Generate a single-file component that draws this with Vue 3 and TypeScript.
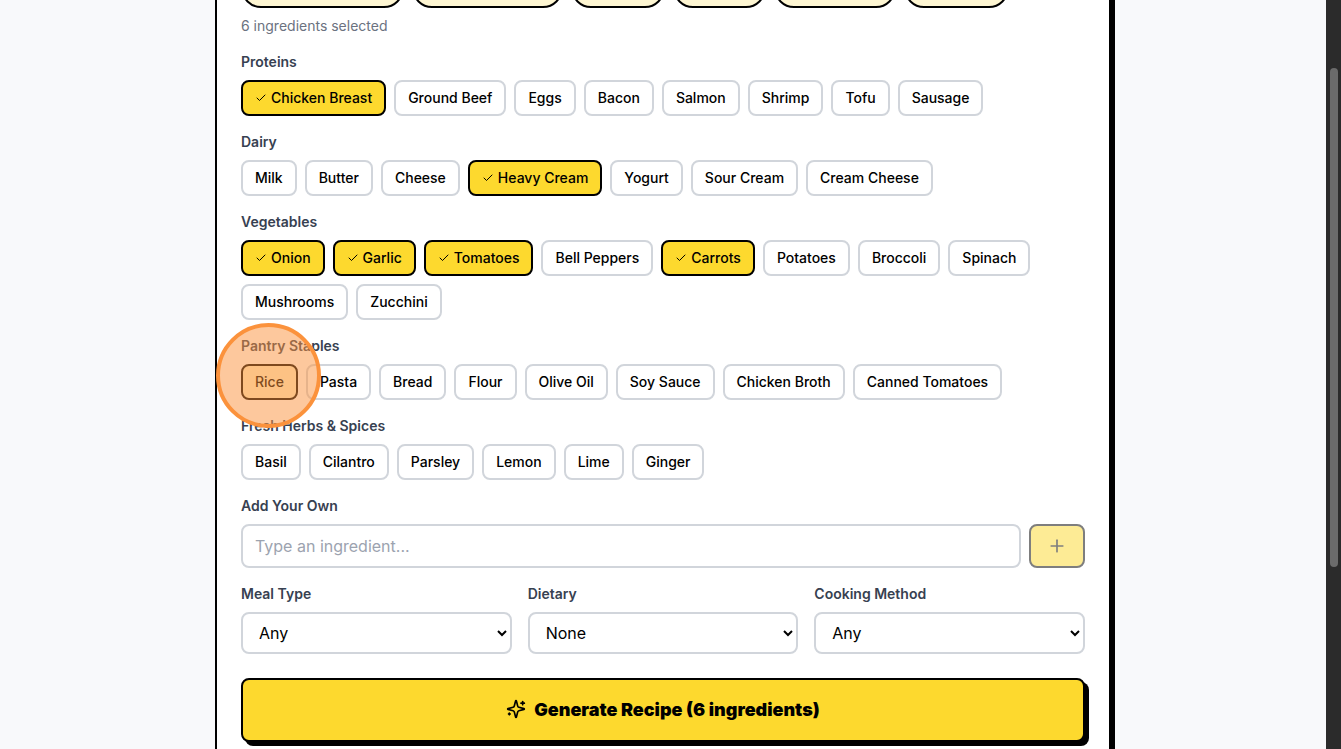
<script setup lang="ts">
interface Section {
  title: string;
  items: string[];
}

// The picked pills sit above the fold: only their lower edges are in view.
const pickedPills = [
  { name: "Chicken Breast", width: 163.4 },
  { name: "Heavy Cream", width: 151 },
  { name: "Onion", width: 93.7 },
  { name: "Garlic", width: 92.6 },
  { name: "Tomatoes", width: 122.3 },
  { name: "Carrots", width: 105 },
];

const selected = pickedPills.map((pill) => pill.name);

const sections: Section[] = [
  { title: "Proteins", items: ["Chicken Breast", "Ground Beef", "Eggs", "Bacon", "Salmon", "Shrimp", "Tofu", "Sausage"] },
  { title: "Dairy", items: ["Milk", "Butter", "Cheese", "Heavy Cream", "Yogurt", "Sour Cream", "Cream Cheese"] },
  { title: "Vegetables", items: ["Onion", "Garlic", "Tomatoes", "Bell Peppers", "Carrots", "Potatoes", "Broccoli", "Spinach", "Mushrooms", "Zucchini"] },
  { title: "Pantry Staples", items: ["Rice", "Pasta", "Bread", "Flour", "Olive Oil", "Soy Sauce", "Chicken Broth", "Canned Tomatoes"] },
  { title: "Fresh Herbs & Spices", items: ["Basil", "Cilantro", "Parsley", "Lemon", "Lime", "Ginger"] },
];

const selects = [
  { label: "Meal Type", value: "Any" },
  { label: "Dietary", value: "None" },
  { label: "Cooking Method", value: "Any" },
];

const hovered = "Rice";
const isSelected = (item: string): boolean => selected.includes(item);
</script>

<template>
  <div class="page">
    <div class="scroll-area">
      <main class="card">
        <div class="picked-row">
          <div v-for="pill in pickedPills" :key="pill.name" class="picked" :aria-label="pill.name" :style="{ width: pill.width + 'px' }"></div>
        </div>
        <p class="count">6 ingredients selected</p>

        <section v-for="section in sections" :key="section.title" class="section">
          <h3 class="label">{{ section.title }}</h3>
          <div class="chips">
            <button v-for="item in section.items" :key="item" class="chip" :class="{ on: isSelected(item), hover: item === hovered }" type="button">
              <svg v-if="isSelected(item)" class="check" viewBox="0 0 24 24" fill="none" stroke="currentColor" stroke-width="2" stroke-linecap="round" stroke-linejoin="round">
                <path d="M20 6 9 17l-5-5" />
              </svg>
              {{ item }}
            </button>
          </div>
        </section>

        <section class="section">
          <h3 class="label">Add Your Own</h3>
          <div class="add-row">
            <input class="text-input" type="text" placeholder="Type an ingredient..." />
            <button class="add-btn" type="button" disabled>
              <svg class="plus" viewBox="0 0 24 24" fill="none" stroke="currentColor" stroke-width="2" stroke-linecap="round" stroke-linejoin="round">
                <path d="M5 12h14" />
                <path d="M12 5v14" />
              </svg>
            </button>
          </div>
        </section>

        <div class="filters">
          <div v-for="field in selects" :key="field.label">
            <h3 class="label">{{ field.label }}</h3>
            <select class="select">
              <option>{{ field.value }}</option>
            </select>
          </div>
        </div>

        <button class="generate" type="button">
          <svg class="sparkles" viewBox="0 0 24 24" fill="none" stroke="currentColor" stroke-width="2" stroke-linecap="round" stroke-linejoin="round">
            <path d="M9.937 15.5A2 2 0 0 0 8.5 14.063l-6.135-1.582a.5.5 0 0 1 0-.962L8.5 9.936A2 2 0 0 0 9.937 8.5l1.582-6.135a.5.5 0 0 1 .963 0L14.063 8.5A2 2 0 0 0 15.5 9.937l6.135 1.581a.5.5 0 0 1 0 .964L15.5 14.063a2 2 0 0 0-1.437 1.437l-1.582 6.135a.5.5 0 0 1-.963 0z" />
            <path d="M20 3v4" />
            <path d="M22 5h-4" />
            <path d="M4 17v2" />
            <path d="M5 18H3" />
          </svg>
          Generate Recipe (6 ingredients)
        </button>
      </main>
    </div>
    <div class="scrollbar"><div class="thumb"></div></div>
    <div class="click-marker"></div>
  </div>
</template>

<style scoped>
.page {
  position: relative;
  display: flex;
  width: 1341px;
  height: 749px;
  overflow: hidden;
  background: #f8f9fb;
  font-family: Inter, "Liberation Sans", sans-serif;
  color: #000;
}
.scroll-area {
  flex: 1;
  min-width: 0;
}
.card {
  box-sizing: border-box;
  width: 896px;
  margin: -34px auto 0;
  padding: 0 24px 24px;
  background: #fff;
  border: 2px solid #000;
  box-shadow: 4px 4px 0 #000;
}
.picked-row {
  display: flex;
  gap: 8px;
}
.picked {
  box-sizing: border-box;
  height: 40px;
  background: #fef6d2;
  border: 2px solid #000;
  border-radius: 20px;
}
.count {
  margin: 8px 0 16px;
  font-size: 14px;
  line-height: 20px;
  color: #6b7280;
}
.section {
  margin-bottom: 16px;
}
.label {
  margin: 0 0 8px;
  font-size: 14px;
  line-height: 20px;
  font-weight: 600;
  color: #374151;
}
.chips {
  display: flex;
  flex-wrap: wrap;
  gap: 8px;
}
.chip {
  display: inline-flex;
  align-items: center;
  gap: 4px;
  box-sizing: border-box;
  height: 36px;
  padding: 0 12px 1px;
  background: #fff;
  border: 2px solid #d1d5db;
  border-radius: 8px;
  font-family: inherit;
  font-size: 14px;
  font-weight: 500;
  color: #000;
}
.chip.on {
  background: #fdd92e;
  border-color: #000;
}
.chip.hover {
  background: #fff3cc;
  border-color: #000;
}
.check {
  width: 12px;
  height: 12px;
}
.add-row {
  display: flex;
  gap: 8px;
}
.text-input {
  flex: 1;
  box-sizing: border-box;
  height: 44px;
  padding: 0 12px;
  border: 2px solid #d1d5db;
  border-radius: 8px;
  font-family: inherit;
  font-size: 16px;
  background: #fff;
  outline: none;
}
.text-input::placeholder {
  color: #9ca3af;
}
.add-btn {
  display: flex;
  align-items: center;
  justify-content: center;
  box-sizing: border-box;
  width: 56px;
  height: 44px;
  padding: 0;
  background: #fdd92e;
  border: 2px solid #000;
  border-radius: 8px;
  color: #000;
  opacity: 0.5;
}
.plus {
  width: 20px;
  height: 20px;
}
.filters {
  display: grid;
  grid-template-columns: repeat(3, 1fr);
  gap: 16px;
  margin-bottom: 24px;
}
.select {
  box-sizing: border-box;
  width: 100%;
  height: 42px;
  padding: 0 12px;
  border: 2px solid #d1d5db;
  border-radius: 8px;
  background: #fff;
  font-family: inherit;
  font-size: 16px;
  color: #000;
}
.generate {
  display: flex;
  align-items: center;
  justify-content: center;
  gap: 8px;
  box-sizing: border-box;
  width: 100%;
  height: 64px;
  padding-bottom: 3px;
  background: #fdd92e;
  border: 2px solid #000;
  border-radius: 8px;
  box-shadow: 4px 4px 0 #000;
  font-family: inherit;
  font-size: 18px;
  font-weight: 900;
  color: #000;
}
.sparkles {
  width: 20px;
  height: 20px;
}
.scrollbar {
  flex: none;
  box-sizing: border-box;
  width: 15px;
  padding: 68px 3px 0 4px;
  background: #2b2b2b;
}
.thumb {
  height: 499px;
  border-radius: 4px;
  background: #6b6b6b;
}
.click-marker {
  position: absolute;
  left: 216px;
  top: 323px;
  box-sizing: border-box;
  width: 105px;
  height: 105px;
  border: 4px solid #fb923c;
  border-radius: 50%;
  background: rgba(251, 146, 60, 0.5);
}
</style>

<style>
html,
body {
  margin: 0;
  overflow: hidden;
}
</style>
